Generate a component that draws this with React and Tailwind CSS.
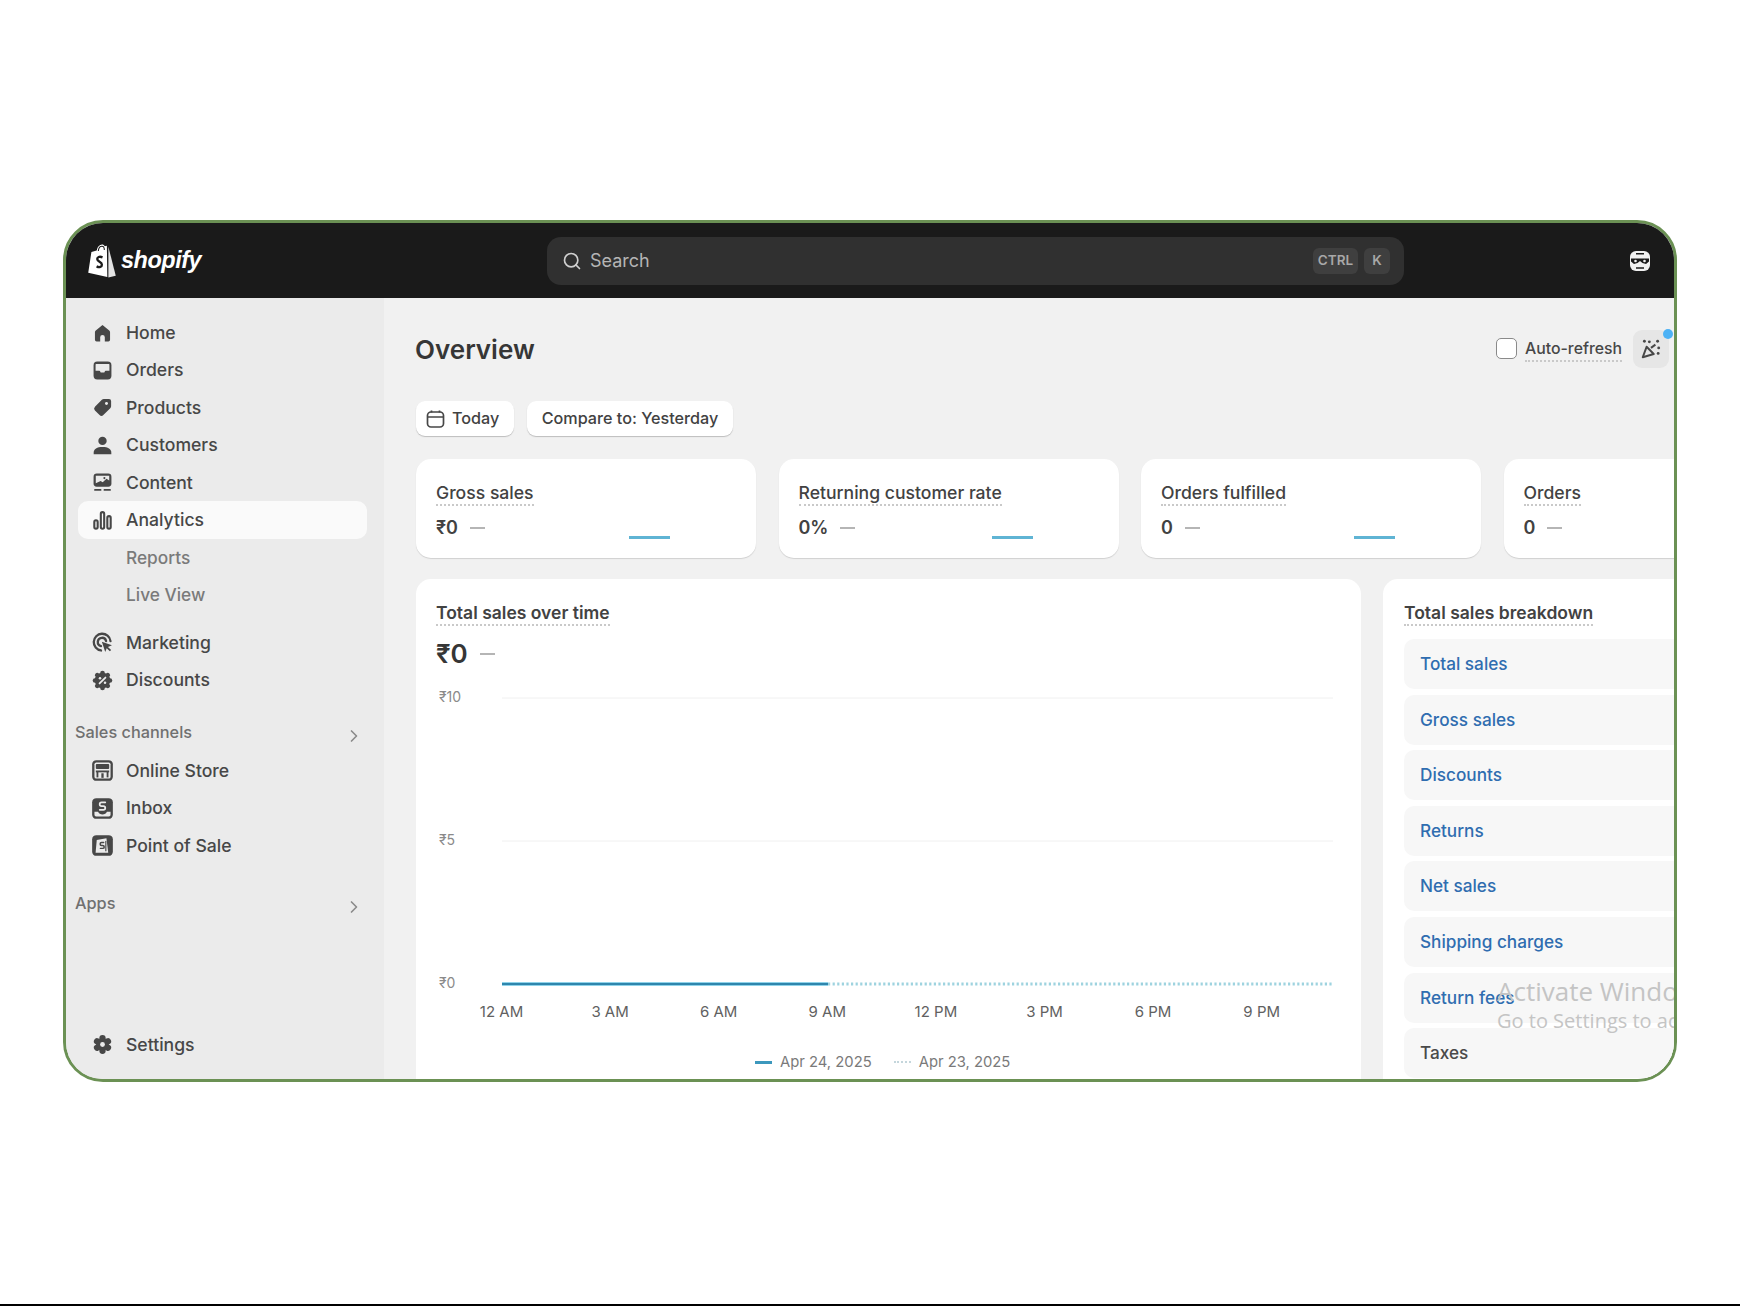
import { ChevronRight, Search } from "lucide-react";

const ink = "#474747";
const bg = "#ebebeb";

function Box({ children, size = 21 }) {
  return (
    <svg width={size} height={size} viewBox="0 0 20 20" className="shrink-0">
      {children}
    </svg>
  );
}

const HomeIcon = () => (
  <Box>
    <path fill={ink} d="M10 2 3.6 7.2A1.8 1.8 0 0 0 2.8 8.7V16a1.6 1.6 0 0 0 1.6 1.6h3.4v-4a2.2 2.2 0 0 1 4.4 0v4h3.4a1.6 1.6 0 0 0 1.6-1.6V8.7a1.8 1.8 0 0 0-.8-1.5z" />
  </Box>
);

const OrdersIcon = () => (
  <Box>
    <rect x="1.5" y="1.5" width="17" height="17" rx="3.5" fill={ink} />
    <path fill={bg} d="M4 3.8h12a.6.6 0 0 1 .6.6v5.8h-3.2c-.7 0-1 .4-1.3 1l-.4.8H8.3l-.4-.8c-.3-.6-.6-1-1.3-1H3.4V4.4a.6.6 0 0 1 .6-.6z" />
  </Box>
);

const TagIcon = () => (
  <Box>
    <path fill={ink} d="M11.2 1.8h5a2 2 0 0 1 2 2v5a2.6 2.6 0 0 1-.8 1.8l-6.6 6.6a2.6 2.6 0 0 1-3.6 0l-4.4-4.4a2.6 2.6 0 0 1 0-3.6l6.6-6.6a2.6 2.6 0 0 1 1.8-.8z" />
    <circle cx="13.8" cy="6.2" r="1.4" fill={bg} />
  </Box>
);

const PersonIcon = () => (
  <Box>
    <circle cx="10" cy="5.6" r="4" fill={ink} />
    <path fill={ink} d="M1.6 18.4v-1.6c0-3.4 3.2-5.3 8.4-5.3s8.4 1.9 8.4 5.3v1.6z" />
  </Box>
);

const ContentIcon = () => (
  <Box>
    <rect x="1.5" y="1.5" width="17" height="12.5" rx="3" fill={ink} />
    <path fill={bg} d="M3.6 3.6h12.8v4.6l-2.6-1.8-3.6 3.4-2-1.2-4.6 2.2z" />
    <circle cx="11.8" cy="5.8" r="1" fill={ink} />
    <rect x="2" y="16.2" width="7" height="1.7" rx=".8" fill={ink} />
    <rect x="11" y="16.2" width="7" height="1.7" rx=".8" fill={ink} />
  </Box>
);

const AnalyticsIcon = () => (
  <Box>
    <g fill="none" stroke={ink} strokeWidth="2">
      <rect x="2.2" y="9.8" width="3.2" height="8" rx="1.6" />
      <rect x="8.4" y="2" width="3.2" height="15.8" rx="1.6" />
      <rect x="14.6" y="5.8" width="3.2" height="12" rx="1.6" />
    </g>
  </Box>
);

const MarketingIcon = () => (
  <Box>
    <g fill="none" stroke={ink} strokeWidth="2.2" strokeLinecap="round">
      <path d="M17.6 8.6A8 8 0 1 0 8.6 17.6" />
      <path d="M13.4 8.6A4 4 0 1 0 8.6 13.4" />
    </g>
    <path fill={ink} d="M9.4 9.4 19 12.6l-3.8 1.6 3 3-1.2 1.2-3-3-1.4 3.6z" />
  </Box>
);

const DiscountIcon = () => (
  <Box>
    <circle cx="10" cy="10" r="7.4" fill={ink} />
    {[0, 45, 90, 135, 180, 225, 270, 315].map((a) => (
      <circle key={a} cx="10" cy="2.9" r="2.2" fill={ink} transform={`rotate(${a} 10 10)`} />
    ))}
    <path d="M7.2 12.8 12.8 7.2" stroke={bg} strokeWidth="1.7" strokeLinecap="round" />
    <circle cx="7.6" cy="7.8" r="1.2" fill={bg} />
    <circle cx="12.4" cy="12.2" r="1.2" fill={bg} />
  </Box>
);

const StoreIcon = () => (
  <Box size={23}>
    <rect x="1" y="1" width="18" height="18" rx="3.6" fill={ink} />
    <rect x="3" y="3" width="14" height="14" rx="1.6" fill={bg} />
    <rect x="4.2" y="4.4" width="11.6" height="4.2" rx=".8" fill={ink} />
    <rect x="4.2" y="10" width="11.6" height="1.6" fill={ink} />
    <rect x="4.8" y="11" width="1.6" height="5" fill={ink} />
    <rect x="13.6" y="11" width="1.6" height="5" fill={ink} />
    <rect x="9" y="12.4" width="2" height="4" fill={ink} />
  </Box>
);

const InboxIcon = () => (
  <Box size={23}>
    <rect x="1" y="1" width="18" height="18" rx="3.6" fill={ink} />
    <path fill={bg} d="M3 12.8h3.2c.6 1.6 2 2.4 3.8 2.4s3.2-.8 3.8-2.4H17v2.7A1.5 1.5 0 0 1 15.5 17h-11A1.5 1.5 0 0 1 3 15.5z" />
    <path d="M12.4 4.6H9.2a1.5 1.5 0 0 0 0 3.3h1.600a1.500 1.500 0 0 1 0 3.200H7.600" fill="none" stroke={bg} strokeWidth="1.5" strokeLinecap="round" />
  </Box>
);

const PosIcon = () => (
  <Box size={23}>
    <rect x="1" y="1" width="18" height="18" rx="3.6" fill={ink} />
    <path fill={bg} d="M5 5.2 13.4 3.6l1.6 12.8H4z" />
    <path d="M11 7.4H9.200a1.200 1.200 0 0 0 0 2.500h1a1.300 1.300 0 0 1 0 2.600H8.200" fill="none" stroke={ink} strokeWidth="1.3" strokeLinecap="round" />
    <rect x="12.4" y="6" width="1" height="9" fill={ink} />
  </Box>
);

const GearIcon = () => (
  <Box>
    {[0, 60, 120, 180, 240, 300].map((a) => (
      <circle key={a} cx="10" cy="4" r="3" fill={ink} transform={`rotate(${a} 10 10)`} />
    ))}
    <circle cx="10" cy="10" r="6" fill={ink} />
    <circle cx="10" cy="10" r="2.3" fill={bg} />
  </Box>
);

const nav = [
  { label: "Home", icon: HomeIcon },
  { label: "Orders", icon: OrdersIcon },
  { label: "Products", icon: TagIcon },
  { label: "Customers", icon: PersonIcon },
  { label: "Content", icon: ContentIcon },
  { label: "Analytics", icon: AnalyticsIcon, active: true },
];

function NavRow({ label, icon: Icon, active }) {
  return (
    <div className={`h-[37.4px] w-[289px] flex items-center rounded-[10px] text-[17.6px] font-medium text-[#474747] ${active ? "bg-[#fafafa]" : ""}`}>
      <span className="w-[48px] flex justify-center">
        <Icon />
      </span>
      {label}
    </div>
  );
}

function SectionHead({ label }) {
  return (
    <div className="h-[37.4px] w-[289px] -ml-[3px] flex items-center justify-between text-[16.3px] font-medium text-[#707070]">
      {label}
      <ChevronRight size={20} color="#8a8a8a" className="mt-[6px]" />
    </div>
  );
}

function Dash() {
  return <span className="w-[15px] h-[2px] bg-[#b5b5b5]" />;
}

function MetricCard({ title, value }) {
  return (
    <div className="w-[340px] h-[99px] shrink-0 rounded-[15px] bg-white pl-[20px] pt-[23px] shadow-[0_1px_1px_#d0d0d0]">
      <div className="w-fit text-[17.6px] leading-[22px] font-medium text-[#424242] border-b-2 border-dotted border-[#c9c9c9]">
        {title}
      </div>
      <div className="mt-[10px] flex items-center gap-[12px] relative">
        <span className="text-[18px] leading-[24px] font-semibold text-[#424242]">{value}</span>
        <Dash />
        <span className="absolute left-[193px] top-[20px] w-[41px] h-[3px] bg-[#5fb4d4]" />
      </div>
    </div>
  );
}

const breakdown = ["Total sales", "Gross sales", "Discounts", "Returns", "Net sales", "Shipping charges", "Return fees"];
const hours = ["12 AM", "3 AM", "6 AM", "9 AM", "12 PM", "3 PM", "6 PM", "9 PM"];

function SalesChart() {
  return (
    <svg width="945" height="350" className="block" fontFamily="Inter, sans-serif">
      <g fill="#8a8a8a" fontSize="14">
        <text x="23" y="22">₹10</text>
        <text x="23" y="165">₹5</text>
        <text x="23" y="308">₹0</text>
      </g>
      <line x1="86" x2="917" y1="18" y2="18" stroke="#f0f0f0" />
      <line x1="86" x2="917" y1="161" y2="161" stroke="#f0f0f0" />
      <line x1="412" x2="917" y1="304" y2="304" stroke="#9ed3df" strokeWidth="3" strokeDasharray="2.2 2.4" />
      <line x1="86" x2="412" y1="304" y2="304" stroke="#8fd3ea" strokeWidth="4" />
      <line x1="86" x2="412" y1="304" y2="304" stroke="#2f86ad" strokeWidth="2" />
      <g fill="#616161" fontSize="15" textAnchor="middle">
        {hours.map((h, i) => (
          <text key={h} x={85.5 + i * 108.6} y="337">{h}</text>
        ))}
      </g>
    </svg>
  );
}

export default function App() {
  return (
    <div className="w-[1740px] h-[1306px] bg-white flex flex-col" style={{ fontFamily: "Inter, sans-serif" }}>
      <div className="mt-[220px] ml-[63px] w-[1614px] h-[862px] border-[3px] border-[#6b9154] rounded-[40px] overflow-hidden flex flex-col relative bg-[#f1f1f1]">
        {/* top bar */}
        <div className="h-[75px] shrink-0 bg-[#1a1a1a] flex items-center relative">
          <div className="ml-[21px] flex items-center gap-[4px] w-[460px]">
            <svg width="30" height="36" viewBox="0 0 28 34">
              <path fill="#fff" d="M1 28 4 8.5 9 7C9.8 3.5 11.8 1.5 14 1.5c1.2 0 2 .6 2.6 1.500l2-.5L19 32z" />
              <path fill="#e3e3e3" d="M20 3.5 27 31l-7 1.500z" />
              <path d="M14.5 13.5c-3-1.2-5-.2-5 1.700 0 2.600 4.400 2.600 4.400 5.300 0 2.200-2.400 3-5 1.600" fill="none" stroke="#1a1a1a" strokeWidth="2.2" />
              <path d="M10.5 7.500C10.800 4.500 12.500 3 14 3s2.200 1.500 2.200 3.500" fill="none" stroke="#1a1a1a" strokeWidth="1" />
            </svg>
            <span className="text-[23.5px] font-bold italic text-white tracking-[-0.5px]" style={{ fontFamily: "'Liberation Sans', sans-serif" }}>
              shopify
            </span>
          </div>
          <div className="w-[857px] h-[48px] rounded-[14px] bg-[#303030] flex items-center pl-[15px] pr-[14px] text-[18px] text-[#b5b5b5]">
            <Search size={20} color="#d0d0d0" className="mr-[8px]" />
            Search
            <span className="ml-auto w-[45px] h-[26px] rounded-[6px] bg-[#3f3f3f] flex items-center justify-center text-[13.5px] font-semibold text-[#a8a8a8]">
              CTRL
            </span>
            <span className="ml-[6px] w-[26px] h-[26px] rounded-[6px] bg-[#3f3f3f] flex items-center justify-center text-[13.5px] font-semibold text-[#a8a8a8]">
              K
            </span>
          </div>
          <svg width="22" height="22" viewBox="0 0 22 22" className="ml-[225px]">
            <rect x="1" y="1" width="20" height="20" rx="6" fill="#f0f0f0" />
            <path d="M2 8.500h18v3l-3 2.500-3.500-1-2.500-2-2.500 2-3.500 1-3-2.500z" fill="#1a1a1a" />
            <path d="M7 3.800h8M7 18h8" stroke="#1a1a1a" strokeWidth="1.5" />
            <circle cx="6.5" cy="11" r="1.3" fill="#f0f0f0" />
            <circle cx="15.5" cy="11" r="1.3" fill="#f0f0f0" />
          </svg>
        </div>

        <div className="flex-1 flex min-h-0">
          {/* sidebar */}
          <div className="w-[318px] shrink-0 bg-[#ebebeb] pl-[12px] pt-[16.5px] pb-[15.5px] flex flex-col">
            {nav.map((n) => (
              <NavRow key={n.label} {...n} />
            ))}
            <div className="h-[37.4px] pl-[48px] flex items-center text-[17.3px] font-medium text-[#7a7a7a]">Reports</div>
            <div className="h-[37.4px] pl-[48px] flex items-center text-[17.3px] font-medium text-[#7a7a7a]">Live View</div>
            <div className="mt-[10.5px]">
              <NavRow label="Marketing" icon={MarketingIcon} />
              <NavRow label="Discounts" icon={DiscountIcon} />
            </div>
            <div className="mt-[15px]">
              <SectionHead label="Sales channels" />
              <div className="mt-[1px]">
                <NavRow label="Online Store" icon={StoreIcon} />
                <NavRow label="Inbox" icon={InboxIcon} />
                <NavRow label="Point of Sale" icon={PosIcon} />
              </div>
            </div>
            <div className="mt-[20.5px]">
              <SectionHead label="Apps" />
            </div>
            <div className="mt-auto">
              <NavRow label="Settings" icon={GearIcon} />
            </div>
          </div>

          {/* main */}
          <div className="flex-1 min-w-0 overflow-hidden pl-[32px] pt-[32px]">
            <div className="h-[38px] flex items-center justify-between pr-[5px]">
              <h1 className="-ml-[1px] text-[26px] font-semibold text-[#363636]">Overview</h1>
              <div className="flex items-center">
                <span className="-mt-[2px] w-[21px] h-[21px] rounded-[5px] border border-[#8a8a8a] bg-white" />
                <span className="mt-[1px] ml-[8px] text-[15.8px] font-medium text-[#474747] border-b-2 border-dotted border-[#c9c9c9] leading-[22px]">
                  Auto-refresh
                </span>
                <span className="relative ml-[11px] w-[36px] h-[38px] rounded-[9px] bg-[#e6e6e6] flex items-center justify-center">
                  <svg width="22" height="22" viewBox="0 0 20 20">
                    <path d="M2.5 17.5 6 8l6.500 6.500z" fill="none" stroke="#474747" strokeWidth="1.8" strokeLinejoin="round" />
                    <g fill="#474747">
                      <circle cx="4" cy="3" r="1.3" />
                      <circle cx="8.5" cy="3.5" r="1.3" />
                      <circle cx="16" cy="3" r="1.3" />
                      <circle cx="17" cy="9" r="1.3" />
                      <circle cx="16.5" cy="14" r="1.3" />
                    </g>
                    <path d="M10 9l4-3" stroke="#474747" strokeWidth="1.8" />
                  </svg>
                  <span className="absolute -right-[4px] -top-[1px] w-[10px] h-[10px] rounded-full bg-[#4db2f5]" />
                </span>
              </div>
            </div>

            <div className="mt-[33px] flex gap-[13px] text-[16.2px] font-medium text-[#424242]">
              <div className="w-[98px] h-[35px] rounded-[9px] bg-white shadow-[0_1px_1px_#bdbdbd] flex items-center pl-[10px] gap-[6px]">
                <svg width="20" height="20" viewBox="0 0 20 20">
                  <rect x="1.5" y="3" width="16" height="15" rx="3.5" fill="none" stroke="#474747" strokeWidth="1.7" />
                  <path d="M2 8h15M5.500 1.500v2M13.500 1.500v2" stroke="#474747" strokeWidth="1.7" />
                </svg>
                Today
              </div>
              <div className="w-[206px] h-[35px] rounded-[9px] bg-white shadow-[0_1px_1px_#bdbdbd] flex items-center justify-center">
                Compare to: Yesterday
              </div>
            </div>

            <div className="mt-[23px] flex gap-[22.5px]">
              <MetricCard title="Gross sales" value="₹0" />
              <MetricCard title="Returning customer rate" value="0%" />
              <MetricCard title="Orders fulfilled" value="0" />
              <MetricCard title="Orders" value="0" />
            </div>

            <div className="mt-[21px] flex gap-[22px]">
              <div className="w-[945px] h-[520px] shrink-0 rounded-t-[15px] bg-white">
                <div className="pl-[20px] pt-[23px]">
                  <div className="w-fit text-[17.5px] leading-[22px] font-semibold text-[#424242] border-b-2 border-dotted border-[#c9c9c9]">
                    Total sales over time
                  </div>
                  <div className="mt-[10px] flex items-center gap-[12px]">
                    <span className="text-[26px] leading-[36px] font-semibold text-[#363636]">₹0</span>
                    <Dash />
                  </div>
                </div>
                <div className="mt-[8px]">
                  <SalesChart />
                </div>
                <div className="mt-[21px] pl-[339px] flex items-center text-[14.8px] text-[#7a7a7a]">
                  <span className="w-[17px] h-[3px] bg-[#3c98bd] mr-[8px]" />
                  Apr 24, 2025
                  <span className="ml-[22px] w-[17px] mr-[8px] border-t-2 border-dotted border-[#c4d6dc]" />
                  Apr 23, 2025
                </div>
              </div>

              <div className="w-[400px] shrink-0 rounded-t-[15px] bg-white pl-[21px] pt-[23px]">
                <div className="w-fit text-[17.5px] leading-[22px] font-semibold text-[#424242] border-b-2 border-dotted border-[#c9c9c9]">
                  Total sales breakdown
                </div>
                <div className="mt-[13px] flex flex-col gap-[5.6px]">
                  {breakdown.map((b) => (
                    <div key={b} className="h-[50px] rounded-[10px] bg-[#f7f7f7] pl-[16px] flex items-center text-[17.2px] font-medium text-[#2f6db0]">
                      {b}
                    </div>
                  ))}
                  <div className="h-[50px] rounded-[10px] bg-[#f7f7f7] pl-[16px] flex items-center text-[17.2px] font-medium text-[#4a4a4a]">
                    Taxes
                  </div>
                </div>
              </div>
            </div>
          </div>
        </div>

        {/* windows watermark */}
        <div className="absolute left-[1431px] top-[751px] whitespace-nowrap text-[#c4c4c4]" style={{ fontFamily: "'Open Sans', sans-serif" }}>
          <div className="text-[26px] leading-[34px]">Activate Windows</div>
          <div className="text-[20px] leading-[26px]">Go to Settings to activate Windows.</div>
        </div>
      </div>
      <div className="mt-auto h-[2px] bg-black" />
    </div>
  );
}
